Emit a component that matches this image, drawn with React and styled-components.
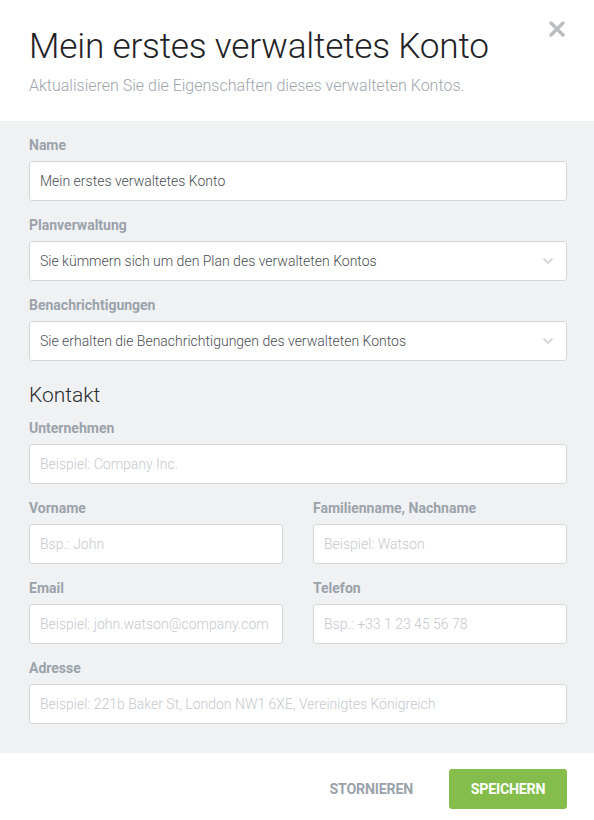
import styled, { createGlobalStyle } from 'styled-components';

const GlobalStyle = createGlobalStyle`
  body {
    margin: 0;
    background: #ffffff;
    font-family: Roboto, "Liberation Sans", Arial, sans-serif;
  }
  * { box-sizing: border-box; }
`;

const Modal = styled.div`
  width: 594px;
  height: 820px;
  display: flex;
  flex-direction: column;
  background: #ffffff;
  position: relative;
`;

const Header = styled.header`
  flex-shrink: 0;
  height: 121px;
  padding: 25px 29px 0;
`;

const Title = styled.h1`
  margin: 0;
  font-size: 35.2px;
  line-height: 42px;
  font-weight: 300;
  color: #1f2226;
  letter-spacing: -0.2px;
`;

const Subtitle = styled.p`
  margin: 9px 0 0;
  font-size: 16px;
  line-height: 20px;
  font-weight: 300;
  color: #9ea6ae;
`;

const CloseButton = styled.button`
  position: absolute;
  top: 20px;
  right: 28px;
  width: 18px;
  height: 18px;
  padding: 0;
  border: 0;
  background: none;
  cursor: pointer;
`;

const Body = styled.div`
  flex: 1;
  background: #f0f1f3;
  padding: 15px 27px 0 29px;
`;

const Field = styled.div`
  margin-bottom: 15px;
`;

const Row = styled.div`
  display: grid;
  grid-template-columns: 1fr 1fr;
  column-gap: 30px;
  margin-bottom: 15px;
  ${Field} { margin-bottom: 0; }
`;

const Label = styled.label`
  display: block;
  font-size: 14px;
  line-height: 18px;
  font-weight: 700;
  color: #9aa3ab;
  margin-bottom: 7px;
`;

const Input = styled.input`
  display: block;
  width: 100%;
  height: 40px;
  padding: 0 10px;
  border: 1px solid #d4d7da;
  border-radius: 3px;
  background: #ffffff;
  font-family: inherit;
  font-size: 14px;
  font-weight: 300;
  color: #4a4e53;
  outline: none;
  &::placeholder { color: #c4c9ce; }
`;

const SelectBox = styled.div`
  display: flex;
  align-items: center;
  justify-content: space-between;
  height: 40px;
  padding: 0 12px 0 10px;
  border: 1px solid #d4d7da;
  border-radius: 3px;
  background: #ffffff;
  font-size: 14px;
  font-weight: 300;
  color: #4a4e53;
`;

const SectionTitle = styled.h2`
  margin: 22px 0 12px;
  font-size: 21px;
  line-height: 24px;
  font-weight: 300;
  color: #2a2d31;
`;

const Footer = styled.footer`
  flex-shrink: 0;
  height: 67px;
  display: flex;
  justify-content: flex-end;
  align-items: flex-start;
  gap: 24px;
  padding: 16px 27px 0 0;
`;

const Button = styled.button`
  height: 40px;
  padding: 0 ${(p) => (p.$primary ? '20px' : '12px')};
  min-width: ${(p) => (p.$primary ? '118px' : 'auto')};
  border: 0;
  border-radius: 3px;
  background: ${(p) => (p.$primary ? '#84bd4b' : 'transparent')};
  color: ${(p) => (p.$primary ? '#ffffff' : '#9aa3ab')};
  font-family: inherit;
  font-size: 14.2px;
  font-weight: 700;
  letter-spacing: -0.2px;
  cursor: pointer;
`;

function Chevron() {
  return (
    <svg width="12" height="8" viewBox="0 0 12 8">
      <path d="M1.5 1.5 L6 6 L10.5 1.5" fill="none" stroke="#d6dadd" strokeWidth="2.2" />
    </svg>
  );
}

function Select({ value }) {
  return (
    <SelectBox>
      <span>{value}</span>
      <Chevron />
    </SelectBox>
  );
}

export default function App() {
  return (
    <>
      <GlobalStyle />
      <Modal>
        <Header>
          <Title>Mein erstes verwaltetes Konto</Title>
          <Subtitle>Aktualisieren Sie die Eigenschaften dieses verwalteten Kontos.</Subtitle>
        </Header>
        <CloseButton aria-label="Schließen">
          <svg width="18" height="18" viewBox="0 0 18 18">
            <path d="M3 3 L15 15 M15 3 L3 15" stroke="#b9bdc1" strokeWidth="3.4" strokeLinecap="round" />
          </svg>
        </CloseButton>
        <Body>
          <Field>
            <Label>Name</Label>
            <Input defaultValue="Mein erstes verwaltetes Konto" />
          </Field>
          <Field>
            <Label>Planverwaltung</Label>
            <Select value="Sie kümmern sich um den Plan des verwalteten Kontos" />
          </Field>
          <Field>
            <Label>Benachrichtigungen</Label>
            <Select value="Sie erhalten die Benachrichtigungen des verwalteten Kontos" />
          </Field>
          <SectionTitle>Kontakt</SectionTitle>
          <Field>
            <Label>Unternehmen</Label>
            <Input placeholder="Beispiel: Company Inc." />
          </Field>
          <Row>
            <Field>
              <Label>Vorname</Label>
              <Input placeholder="Bsp.: John" />
            </Field>
            <Field>
              <Label>Familienname, Nachname</Label>
              <Input placeholder="Beispiel: Watson" />
            </Field>
          </Row>
          <Row>
            <Field>
              <Label>Email</Label>
              <Input placeholder="Beispiel: john.watson@company.com" />
            </Field>
            <Field>
              <Label>Telefon</Label>
              <Input placeholder="Bsp.: +33 1 23 45 56 78" />
            </Field>
          </Row>
          <Field>
            <Label>Adresse</Label>
            <Input placeholder="Beispiel: 221b Baker St, London NW1 6XE, Vereinigtes Königreich" />
          </Field>
        </Body>
        <Footer>
          <Button>STORNIEREN</Button>
          <Button $primary>SPEICHERN</Button>
        </Footer>
      </Modal>
    </>
  );
}
